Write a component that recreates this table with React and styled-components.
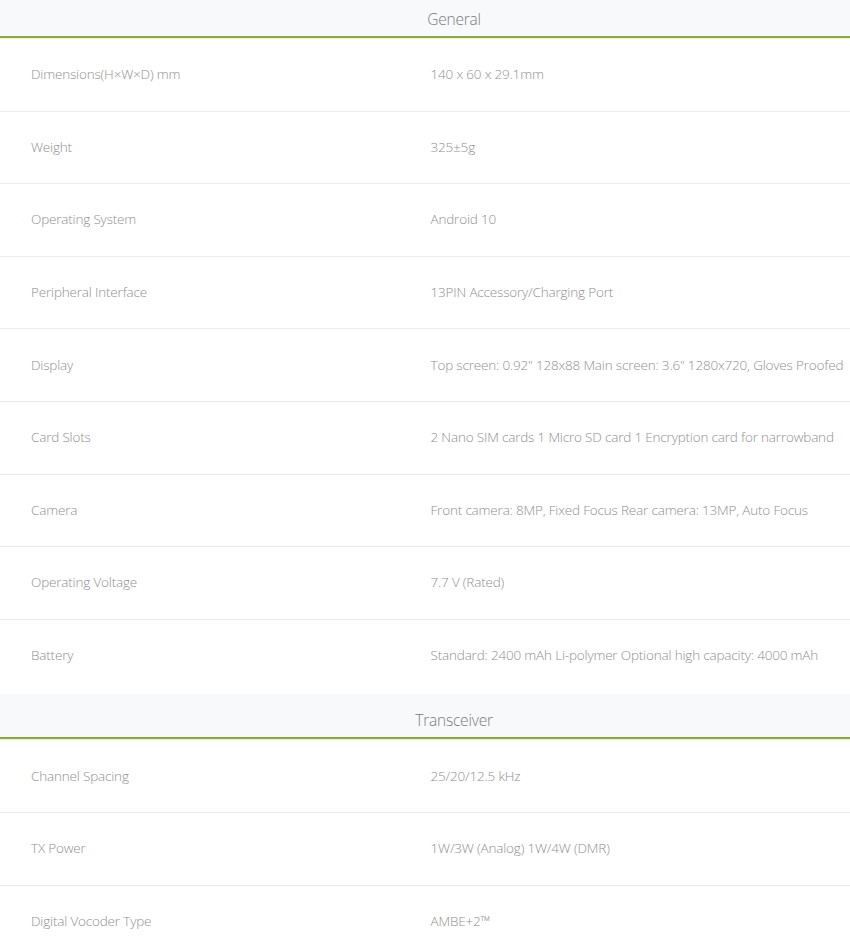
import styled, { createGlobalStyle } from "styled-components";

const GlobalStyle = createGlobalStyle`
    html, body {
        margin: 0;
        padding: 0;
        background: #fff;
        overflow: hidden;
    }
    body {
        font-family: "Open Sans", "Liberation Sans", sans-serif;
    }
`

const Page = styled.div`
    width: 908px;
    margin-top: -7px;
`

const Section = styled.section`
    margin-bottom: 3px;
`

const Head = styled.div`
    background-color: #f8f9fa;
    border-bottom: 2px solid #86ad2f;
    text-align: center;
    font-size: 15.5px;
    font-weight: 300;
    letter-spacing: -0.2px;
    line-height: 21px;
    padding: 16px 0 6px;
    color: #7a7a7a;
`

const Body = styled.div`
    border-top: 1px solid #eeeeee;
`

const Row = styled.div`
    display: grid;
    grid-template-columns: 44% 56%;
    border-bottom: ${props => props.last ? "none" : "1px solid #ebebeb"};
`

const Cell = styled.div`
    padding: 25.3px 0 25.3px 31px;
    font-size: 13.5px;
    font-weight: 300;
    letter-spacing: -0.18px;
    line-height: 21px;
    color: #909090;
    white-space: nowrap;
`

const sections = [
    {
        title: "General",
        rows: [
            ["Dimensions(H×W×D) mm", "140 x 60 x 29.1mm"],
            ["Weight", "325±5g"],
            ["Operating System", "Android 10"],
            ["Peripheral Interface", "13PIN Accessory/Charging Port"],
            ["Display", "Top screen: 0.92\" 128x88 Main screen: 3.6\" 1280x720, Gloves Proofed"],
            ["Card Slots", "2 Nano SIM cards 1 Micro SD card 1 Encryption card for narrowband"],
            ["Camera", "Front camera: 8MP, Fixed Focus Rear camera: 13MP, Auto Focus"],
            ["Operating Voltage", "7.7 V (Rated)"],
            ["Battery", "Standard: 2400 mAh Li-polymer Optional high capacity: 4000 mAh"],
        ],
    },
    {
        title: "Transceiver",
        rows: [
            ["Channel Spacing", "25/20/12.5 kHz"],
            ["TX Power", "1W/3W (Analog) 1W/4W (DMR)"],
            ["Digital Vocoder Type", "AMBE+2™"],
        ],
    },
]

function App() {
    return (
        <>
            <GlobalStyle />
            <Page>
                {sections.map((s) => (
                    <Section key={s.title}>
                        <Head>{s.title}</Head>
                        <Body>
                            {s.rows.map(([label, value], i) => (
                                <Row key={label} last={i === s.rows.length - 1}>
                                    <Cell>{label}</Cell>
                                    <Cell>{value}</Cell>
                                </Row>
                            ))}
                        </Body>
                    </Section>
                ))}
            </Page>
        </>
    )
}

export default App;
